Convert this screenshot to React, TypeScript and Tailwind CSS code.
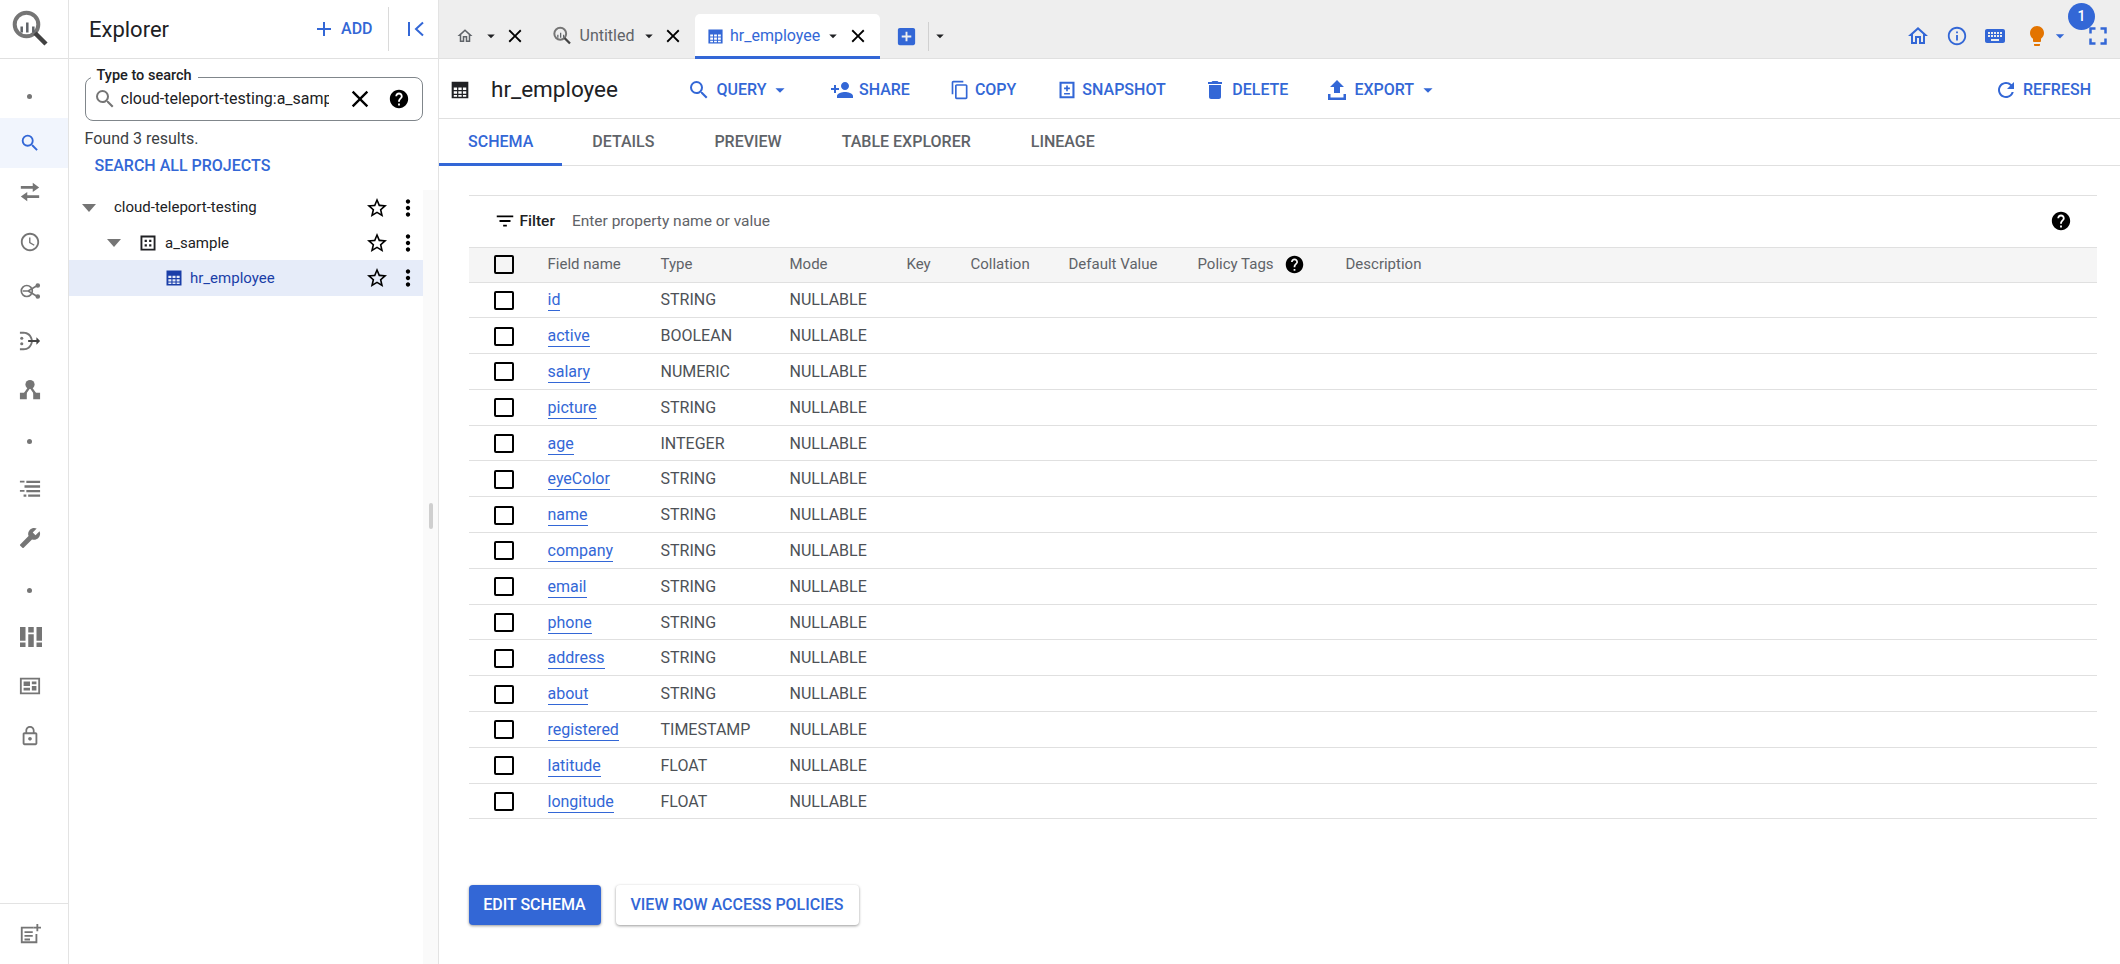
import {
  MdAccessTime,
  MdAdd,
  MdAddBox,
  MdArrowDropDown,
  MdBuild,
  MdClose,
  MdContentCopy,
  MdDelete,
  MdFilterList,
  MdFullscreen,
  MdHelp,
  MdInfoOutline,
  MdKeyboard,
  MdLightbulb,
  MdLockOutline,
  MdMoreVert,
  MdOutlineHome,
  MdPersonAdd,
  MdRefresh,
  MdSearch,
  MdStarBorder,
} from "react-icons/md";

const FIELDS = [
  ["id", "STRING"],
  ["active", "BOOLEAN"],
  ["salary", "NUMERIC"],
  ["picture", "STRING"],
  ["age", "INTEGER"],
  ["eyeColor", "STRING"],
  ["name", "STRING"],
  ["company", "STRING"],
  ["email", "STRING"],
  ["phone", "STRING"],
  ["address", "STRING"],
  ["about", "STRING"],
  ["registered", "TIMESTAMP"],
  ["latitude", "FLOAT"],
  ["longitude", "FLOAT"],
];

const COLS = "grid grid-cols-[79px_113px_129px_117px_64px_98px_129px_148px_1fr] items-center";

function Logo({ className }: { className: string }) {
  return (
    <svg viewBox="0 0 44 44" className={className}>
      <circle cx="14.5" cy="17.5" r="11.8" fill="none" stroke="#757575" strokeWidth="4" />
      <path d="M23 26l11 11" stroke="#424242" strokeWidth="4.500" />
      <path d="M9.7 19.5v6M15.3 15.5v10M21.3 19.5v6" stroke="#5f6368" strokeWidth="2.500" />
    </svg>
  );
}

function TableIcon({ className }: { className: string }) {
  return (
    <svg viewBox="0 0 24 24" className={className} fill="currentColor">
      <path
        fillRule="evenodd"
        d="M2 2h20v20H2zM4.5 9v3h4V9zM10 9v3h4V9zM15.5 9v3h4V9zM4.5 13.5v3h4v-3zM10 13.5v3h4v-3zM15.5 13.5v3h4v-3zM4.5 18v2h4v-2zM10 18v2h4v-2zM15.5 18v2h4v-2z"
      />
    </svg>
  );
}

function DatasetIcon({ className }: { className: string }) {
  return (
    <svg viewBox="0 0 24 24" className={className} fill="currentColor">
      <path
        fillRule="evenodd"
        d="M2 2h20v20H2zM4.5 4.5v15h15v-15zM7.5 7.5h3v3h-3zM13.5 7.5h3v3h-3zM7.5 13.5h3v3h-3zM13.5 13.5h3v3h-3z"
      />
    </svg>
  );
}

function SnapshotIcon({ className }: { className: string }) {
  return (
    <svg viewBox="0 0 24 24" className={className} fill="currentColor">
      <path
        fillRule="evenodd"
        d="M3 2h18v20H3zM5.5 4.5v15h13v-15zM11 6.5h2v2.5h2.5v2H13v2.5h-2V11H8.5V9H11zM8.5 15.5h7v2h-7z"
      />
    </svg>
  );
}

function ExportIcon({ className }: { className: string }) {
  return (
    <svg viewBox="0 0 24 24" className={className} fill="currentColor">
      <path d="M9 15h6V9h4l-7-7-7 7h4zM3 16v6h18v-6h-2.500v3.500h-13V16z" />
    </svg>
  );
}

function SwapIcon() {
  return (
    <svg viewBox="0 0 24 24" className="h-[22px] w-[22px]" fill="#757575">
      <path d="M2 5.500h13V2l7 5-7 5V8.500H2zM22 15.500H9V12l-7 5 7 5v-3.500h13z" />
    </svg>
  );
}

function HubIcon() {
  return (
    <svg viewBox="0 0 24 24" className="h-[22px] w-[22px]" fill="none" stroke="#757575" strokeWidth="1.800">
      <circle cx="8.500" cy="12" r="6" />
      <path d="M4 12h6l10-6M10 12l10 6" />
      <circle cx="20.500" cy="6" r="1.600" fill="#757575" />
      <circle cx="20.500" cy="18" r="1.600" fill="#757575" />
    </svg>
  );
}

function MergeIcon() {
  return (
    <svg viewBox="0 0 24 24" className="h-[22px] w-[22px]" fill="#757575">
      <path d="M1 2h4c5 0 9 3 10 9h-2c-1-4.500-4-7-8-7H1zM1 22h4c5 0 9-3 10-9h-2c-1 4.500-4 7-8 7H1z" />
      <path d="M10 11h9V8l4 4-4 4v-3h-9z" fill="#424242" />
      <circle cx="3" cy="9" r="1.700" />
      <circle cx="3" cy="15" r="1.700" />
    </svg>
  );
}

function NetworkIcon() {
  return (
    <svg viewBox="0 0 24 24" className="h-[22px] w-[22px]" fill="#757575">
      <circle cx="12" cy="6" r="5" />
      <path d="M1 15h7.500v7H1zM15.500 15H23v7h-7.500z" />
      <path d="M12 8L5 18M12 8l7 10" stroke="#757575" strokeWidth="2.500" />
    </svg>
  );
}

function ListIcon() {
  return (
    <svg viewBox="0 0 24 24" className="h-[22px] w-[22px]" fill="#757575">
      <path d="M1 3h5v2H1zM8 3h15v2.500H8zM6 8h17v2.500H6zM1 13h5v2H1zM8 13h15v2.500H8zM5 18h3v2.500H5zM10 18h13v2.500H10z" />
    </svg>
  );
}

function BlocksIcon() {
  return (
    <svg viewBox="0 0 26 24" className="h-[22px] w-[24px]" fill="#757575">
      <path d="M1 1h6v15H1zM1 18h6v5H1zM10 1h6v6h-6zM10 9h6v14h-6zM19 1h6v15h-6zM19 18h6v5h-6z" />
    </svg>
  );
}

function PanelIcon() {
  return (
    <svg viewBox="0 0 24 24" className="h-[22px] w-[22px]" fill="#757575">
      <path
        fillRule="evenodd"
        d="M1 3h22v18H1zM3 5v14h18V5zM5 7h7v5H5zM5 14h7v3H5zM14 7h5v3h-5zM14 12h5v5h-5z"
      />
    </svg>
  );
}

function NoteIcon() {
  return (
    <svg viewBox="0 0 24 24" className="h-[22px] w-[22px]" fill="#757575">
      <path d="M2 4h14v2H4v14h14v-8h2v10H2z" />
      <path d="M6 9h9v2H6zM6 13h9v2H6zM6 17h6v2H6zM19 1h2v3h3v2h-3v3h-2V6h-3V4h3z" />
    </svg>
  );
}

function Tri({ className }: { className: string }) {
  return (
    <svg viewBox="0 0 14 8" className={className} fill="#757575">
      <path d="M0 0h14L7 8z" />
    </svg>
  );
}

function RailItem({ children, active }: { children: React.ReactNode; active?: boolean }) {
  return (
    <div className={`flex h-[49.4px] items-center pl-[18.500px] ${active ? "bg-[#f1f5fd]" : ""}`}>{children}</div>
  );
}

function RailDot() {
  return (
    <div className="flex h-[49.4px] items-center pl-[27px] pt-[5px]">
      <span className="h-[5px] w-[5px] rounded-full bg-[#757575]" />
    </div>
  );
}

function Rail() {
  return (
    <div className="flex w-[69px] shrink-0 flex-col border-r-[1.500px] border-[#e3e3e3]">
      <div className="flex h-[59px] shrink-0 items-center border-b-[1.500px] border-[#e0e0e0] pl-[12px]">
        <Logo className="h-[44px] w-[44px]" />
      </div>
      <div className="flex flex-1 flex-col pt-[10px]">
        <RailDot />
        <RailItem active>
          <MdSearch className="h-[22px] w-[22px] text-[#3367d6]" />
        </RailItem>
        <RailItem>
          <SwapIcon />
        </RailItem>
        <RailItem>
          <MdAccessTime className="h-[22px] w-[22px] text-[#757575]" />
        </RailItem>
        <RailItem>
          <HubIcon />
        </RailItem>
        <RailItem>
          <MergeIcon />
        </RailItem>
        <RailItem>
          <NetworkIcon />
        </RailItem>
        <RailDot />
        <RailItem>
          <ListIcon />
        </RailItem>
        <RailItem>
          <MdBuild className="h-[22px] w-[22px] -scale-x-100 text-[#757575]" />
        </RailItem>
        <RailDot />
        <RailItem>
          <BlocksIcon />
        </RailItem>
        <RailItem>
          <PanelIcon />
        </RailItem>
        <RailItem>
          <MdLockOutline className="h-[22px] w-[22px] text-[#757575]" />
        </RailItem>
      </div>
      <div className="flex h-[61px] items-center border-t-[1.500px] border-[#e3e3e3] pl-[18.500px]">
        <NoteIcon />
      </div>
    </div>
  );
}

function TreeRow({
  pad,
  label,
  selected,
  icon,
  caret,
}: {
  pad: string;
  label: string;
  selected?: boolean;
  icon?: React.ReactNode;
  caret?: boolean;
}) {
  return (
    <div className={`flex h-[35.200px] items-center ${pad} ${selected ? "bg-[#e6ecf9] text-[#1a3ea8]" : "text-[#202124]"}`}>
      {caret && <Tri className="mr-[18px] h-[8px] w-[14px]" />}
      {icon}
      <span className="text-[15px]">{label}</span>
      <MdStarBorder className="ml-auto h-[24px] w-[24px] text-black" />
      <MdMoreVert className="ml-[6px] mr-[2px] h-[26px] w-[26px] text-black" />
    </div>
  );
}

function Explorer() {
  return (
    <div className="flex w-[369px] shrink-0 flex-col">
      <div className="flex h-[59px] shrink-0 items-center border-b-[1.500px] border-[#e0e0e0] pl-[20px]">
        <span className="text-[22px] text-[#202124]">Explorer</span>
        <MdAdd className="ml-[143px] h-[24px] w-[24px] text-[#3367d6]" />
        <span className="ml-[5px] text-[16px] font-medium text-[#3367d6]">ADD</span>
        <span className="ml-[15px] h-[44px] w-px bg-[#dadada]" />
        <svg viewBox="0 0 16 16" className="ml-[19px] h-[16px] w-[16px]" fill="none" stroke="#3367d6" strokeWidth="2">
          <path d="M1 1v14M15 1.500L8 8l7 6.500" />
        </svg>
      </div>
      <div className="h-[131px] shrink-0 pl-[15.500px] pr-[15px] pt-[17.500px]">
        <div className="relative flex h-[44px] items-center rounded-[8px] border-[1.500px] border-[#80868b] pl-[7.500px]">
          <span className="absolute left-[5px] top-[-11.500px] bg-white px-[6px] text-[14.500px] font-medium leading-[20px] text-[#202124]">
            Type to search
          </span>
          <MdSearch className="h-[24px] w-[24px] text-[#757575]" />
          <span className="ml-[3.500px] w-[208px] overflow-hidden whitespace-nowrap text-[16px] text-[#202124]">
            cloud-teleport-testing:a_sample
          </span>
          <MdClose className="ml-[17px] h-[28px] w-[28px] text-black" />
          <MdHelp className="ml-[14px] h-[22px] w-[22px] text-black" />
        </div>
        <div className="mt-[7px] text-[16px] leading-[22px] text-[#3c4043]">Found 3 results.</div>
        <div className="ml-[10px] mt-[5px] text-[16px] font-medium leading-[22px] text-[#3367d6]">SEARCH ALL PROJECTS</div>
      </div>
      <div className="flex flex-1">
        <div className="w-[354px]">
          <TreeRow pad="pl-[13px]" caret label="cloud-teleport-testing" />
          <TreeRow pad="pl-[38px]" caret label="a_sample" icon={<DatasetIcon className="mr-[8px] h-[18px] w-[18px] text-[#202124]" />} />
          <TreeRow selected pad="pl-[96px]" label="hr_employee" icon={<TableIcon className="mr-[7px] h-[18px] w-[18px] text-[#1a3ea8]" />} />
        </div>
        <div className="flex-1 bg-[#fafafa] pl-[6px] pt-[313px]">
          <div className="h-[26px] w-[4px] rounded-full bg-[#cfcfcf]" />
        </div>
      </div>
    </div>
  );
}

function TopBar() {
  return (
    <div className="relative flex h-[59px] shrink-0 items-end border-b-[1.500px] border-[#e0e0e0] bg-[#eeeeee]">
      <div className="flex h-[45px] flex-1 items-center pt-[1px]">
        <MdOutlineHome className="ml-[17px] h-[18px] w-[18px] text-[#5f6368]" />
        <MdArrowDropDown className="ml-[8px] h-[18px] w-[18px] text-[#202124]" />
        <MdClose className="ml-[4px] h-[22px] w-[22px] text-black" />
        <Logo className="ml-[26.500px] h-[22px] w-[22px]" />
        <span className="ml-[5px] text-[16px] text-[#5f6368]">Untitled</span>
        <MdArrowDropDown className="ml-[6px] h-[18px] w-[18px] text-[#202124]" />
        <MdClose className="ml-[4px] h-[22px] w-[22px] text-black" />
        <div className="ml-[11px] flex h-[45px] w-[185px] items-center rounded-t-[5px] border-b-[3px] border-[#3367d6] bg-white pl-[12px] pt-[3px]">
          <TableIcon className="h-[17px] w-[17px] text-[#3367d6]" />
          <span className="ml-[5.500px] text-[16px] text-[#3367d6]">hr_employee</span>
          <MdArrowDropDown className="ml-[3.500px] h-[18px] w-[18px] text-[#202124]" />
          <MdClose className="ml-[5.500px] h-[22px] w-[22px] text-black" />
        </div>
        <MdAddBox className="ml-[14.500px] h-[23px] w-[23px] text-[#3367d6]" />
        <span className="ml-[10.500px] h-[29px] w-px bg-[#d0d0d0]" />
        <MdArrowDropDown className="ml-[1.500px] h-[18px] w-[18px] text-[#202124]" />
        <div className="ml-auto flex items-center pr-[7px] text-[#3367d6]">
          <MdOutlineHome className="h-[24px] w-[24px]" />
          <MdInfoOutline className="ml-[16px] h-[22px] w-[22px]" />
          <MdKeyboard className="ml-[15px] h-[24px] w-[24px]" />
          <MdLightbulb className="ml-[18px] h-[24px] w-[24px] text-[#e37400]" />
          <MdArrowDropDown className="ml-[1px] h-[20px] w-[20px]" />
          <MdFullscreen className="ml-[13px] h-[30px] w-[30px]" />
        </div>
      </div>
      <span className="absolute right-[25px] top-[3px] flex h-[27px] w-[27px] items-center justify-center rounded-full bg-[#3367d6] text-[14px] font-medium text-white">
        1
      </span>
    </div>
  );
}

function ToolBtn({
  icon,
  label,
  className,
  caret,
}: {
  icon: React.ReactNode;
  label: string;
  className: string;
  caret?: boolean;
}) {
  return (
    <div className={`flex items-center text-[#3367d6] ${className}`}>
      {icon}
      <span className="ml-[5px] text-[16px] font-medium">{label}</span>
      {caret && <MdArrowDropDown className="ml-[3px] h-[22px] w-[22px]" />}
    </div>
  );
}

function Toolbar() {
  return (
    <div className="flex h-[60px] shrink-0 items-center border-b-[1.500px] border-[#e0e0e0] pl-[11px] pr-[29px] pt-[2px]">
      <TableIcon className="h-[20px] w-[20px] text-[#202124]" />
      <span className="ml-[21px] text-[22.500px] text-[#202124]">hr_employee</span>
      <ToolBtn className="ml-[69.500px]" icon={<MdSearch className="h-[24px] w-[24px]" />} label="QUERY" caret />
      <ToolBtn className="ml-[38.500px]" icon={<MdPersonAdd className="h-[24px] w-[24px]" />} label="SHARE" />
      <ToolBtn className="ml-[40px]" icon={<MdContentCopy className="h-[20px] w-[20px]" />} label="COPY" />
      <ToolBtn className="ml-[41px]" icon={<SnapshotIcon className="h-[20px] w-[20px]" />} label="SNAPSHOT" />
      <ToolBtn className="ml-[37.500px]" icon={<MdDelete className="h-[24px] w-[24px]" />} label="DELETE" />
      <ToolBtn className="ml-[37px]" icon={<ExportIcon className="h-[24px] w-[24px]" />} label="EXPORT" caret />
      <ToolBtn className="ml-auto" icon={<MdRefresh className="h-[24px] w-[24px]" />} label="REFRESH" />
    </div>
  );
}

function Tabs() {
  return (
    <div className="flex h-[47px] shrink-0 border-b-[1.500px] border-[#e0e0e0] text-[16px] font-medium">
      <div className="flex h-[46.500px] items-center border-b-[3px] border-[#3367d6] px-[29px] pt-[3px] text-[#3367d6]">SCHEMA</div>
      {["DETAILS", "PREVIEW", "TABLE EXPLORER", "LINEAGE"].map((t) => (
        <div key={t} className="flex items-center px-[30px] text-[#5f6368]">
          {t}
        </div>
      ))}
    </div>
  );
}

function Checkbox() {
  return <span className="ml-[25px] block h-[19px] w-[20px] rounded-[2px] border-[2.500px] border-black" />;
}

function SchemaTable() {
  return (
    <div className="ml-[29.500px] mt-[29px] w-[1628px] shrink-0 border-t-[1.500px] border-[#e0e0e0]">
      <div className="flex h-[50.500px] items-center pl-[25px] pr-[25px]">
        <MdFilterList className="h-[22px] w-[22px] text-black" />
        <span className="ml-[4px] text-[15.500px] font-medium text-[#202124]">Filter</span>
        <span className="ml-[17px] text-[15.500px] text-[#5f6368]">Enter property name or value</span>
        <MdHelp className="ml-auto h-[22px] w-[22px] text-black" />
      </div>
      <div className={`${COLS} h-[36px] border-y-[1.500px] border-[#e0e0e0] bg-[#f5f5f5] text-[15px] text-[#5f6368]`}>
        <Checkbox />
        <span>Field name</span>
        <span>Type</span>
        <span>Mode</span>
        <span>Key</span>
        <span>Collation</span>
        <span>Default Value</span>
        <span className="flex items-center gap-[10px]">
          Policy Tags
          <MdHelp className="h-[21px] w-[21px] text-black" />
        </span>
        <span>Description</span>
      </div>
      {FIELDS.map(([name, type]) => (
        <div key={name} className={`${COLS} h-[35.800px] border-b-[1.500px] border-[#e0e0e0] pt-[1px] text-[16px] text-[#4d5156]`}>
          <Checkbox />
          <span>
            <span className="inline-block border-b border-[#3367d6] leading-[20px] text-[#3367d6]">{name}</span>
          </span>
          <span>{type}</span>
          <span>NULLABLE</span>
        </div>
      ))}
      <div className="mt-[66px] flex gap-[15px]">
        <div className="flex h-[40px] w-[132px] items-center justify-center rounded-[4px] bg-[#3367d6] text-[16px] font-medium text-white shadow-[0_1px_3px_rgba(0,0,0,0.4)]">
          EDIT SCHEMA
        </div>
        <div className="flex h-[40px] w-[243px] items-center justify-center rounded-[4px] bg-white text-[16px] font-medium text-[#3367d6] shadow-[0_1px_3px_rgba(0,0,0,0.4)]">
          VIEW ROW ACCESS POLICIES
        </div>
      </div>
    </div>
  );
}

export default function App() {
  return (
    <div className="flex h-[964px] w-[2120px] overflow-hidden bg-white font-['Roboto',sans-serif]">
      <Rail />
      <Explorer />
      <div className="flex min-w-0 flex-1 flex-col border-l-[1.500px] border-[#e3e3e3]">
        <TopBar />
        <Toolbar />
        <Tabs />
        <SchemaTable />
      </div>
    </div>
  );
}
